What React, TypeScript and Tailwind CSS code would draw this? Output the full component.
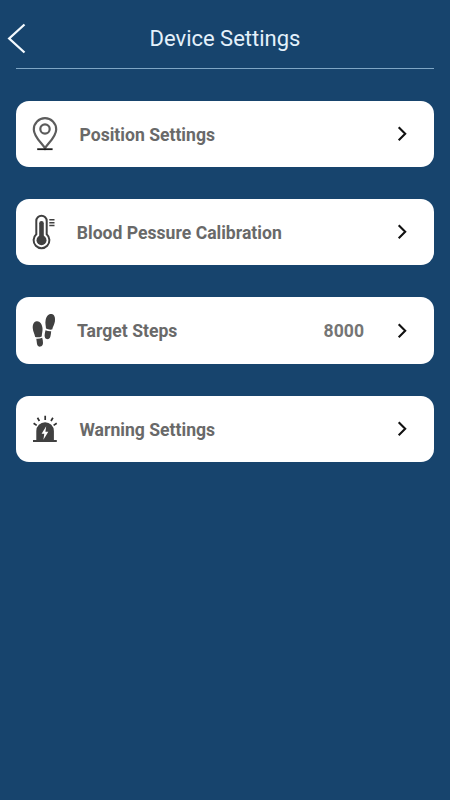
import React from 'react';

const PinIcon = () => (
  <svg width="40" height="40" viewBox="0 0 40 40" fill="none" stroke="#5c5c5c" strokeWidth="2.2">
    <path d="M19 34.3C16.5 29.5 7.8 23 7.8 15.4a11.2 11.2 0 0 1 22.4 0C30.2 23 21.5 29.5 19 34.3z" />
    <circle cx="19" cy="15" r="4.7" />
    <path d="M11.2 35.2h15.4" stroke="#1c1c1c" strokeWidth="1.8" />
  </svg>
);

const ThermometerIcon = () => (
  <svg width="40" height="40" viewBox="0 0 40 40" fill="none" stroke="#404040" strokeWidth="2">
    <path d="M10.3 22.3V9a5.2 5.2 0 0 1 10.4 0v13.3a7.9 7.9 0 1 1-10.4 0z" />
    <path d="M15.5 11.2v15" strokeWidth="4.6" strokeLinecap="round" />
    <circle cx="15.5" cy="28.2" r="5" fill="#404040" stroke="none" />
    <path d="M23.3 7.8h5.2M23.3 10.7h5.2M23.3 13.5h5.2" strokeWidth="1.4" />
  </svg>
);

const StepsIcon = () => (
  <svg width="40" height="40" viewBox="0 0 40 40" fill="#404040">
    <path d="M10.6 10.2C7.6 10.6 6.4 14 6.8 17.6c.3 3.1 1.6 5 2.4 8.4 2.2.6 4.5.3 6.5-.6.2-3.2 1.1-4.9.8-8.4-.4-4-2.6-7.2-5.9-6.8z" />
    <path d="M10.3 27.7c2 .2 4-.1 5.9-.9.5 1.9.9 3.6.8 5.2-.1 2-1.1 3.4-2.7 3.6-1.6.2-2.8-.8-3.3-2.7-.3-1.6-.3-3.3-.7-5.2z" />
    <path d="M25.6 3.1c2.9.4 3.9 3.7 3.3 7.5-.5 3.1-1.9 4.8-2.7 8-2.2.4-4.4 0-6.2-1-.1-3.1-1-4.9-.4-8.3.6-4 2.9-6.6 6-6.2z" />
    <path d="M19.5 19.2c1.8.8 3.7 1.1 5.7 1-.3 1.8-.3 3.5-.8 5.2-.6 2-1.9 3-3.4 2.7-1.6-.3-2.4-1.6-2.4-3.6 0-1.8.5-3.5.9-5.3z" />
  </svg>
);

const SirenIcon = () => (
  <svg width="40" height="40" viewBox="0 0 40 40" fill="#404040">
    <path d="M10.3 31V22a8.8 8.8 0 0 1 17.6 0v9h2.9v2H7v-2z" />
    <path d="M20.2 17.3l-4.6 7.4h2.7l-.9 6 4.9-7.9h-2.9z" fill="#fff" />
    <path d="M19.2 6.8v4.2M11.5 8.8l1.9 3.2M26.9 8.8l-1.9 3.2M7.6 14.2l3.1 2.2M30.7 14.2l-3.1 2.2" stroke="#303030" strokeWidth="1.7" />
  </svg>
);

interface SettingItem {
  label: string;
  labelClass: string;
  icon: React.ReactNode;
  value?: string;
}

const settings: SettingItem[] = [
  { label: 'Position Settings', labelClass: 'ml-[13.5px]', icon: <PinIcon /> },
  { label: 'Blood Pessure Calibration', labelClass: 'ml-[10.8px]', icon: <ThermometerIcon /> },
  { label: 'Target Steps', labelClass: 'ml-[11px]', icon: <StepsIcon />, value: '8000' },
  { label: 'Warning Settings', labelClass: 'ml-[13.5px]', icon: <SirenIcon /> },
];

const App: React.FC = () => (
  <div className="min-h-screen w-full bg-[#17446d] px-4 font-[Roboto,sans-serif]">
    <header className="relative flex h-[69px] items-center justify-center border-b border-[#7fa6c4] pt-2.5">
      <button className="absolute -left-[9px] top-[22px]" aria-label="Back">
        <svg width="20" height="32" viewBox="0 0 20 32" fill="none" stroke="#f4faff" strokeWidth="2.3">
          <path d="M17.5 2.5L2.2 16.5l15.3 14" />
        </svg>
      </button>
      <h1 className="text-[22px] leading-7 text-[#e4f1fb]">Device Settings</h1>
    </header>
    <main className="mt-[31.7px] flex flex-col gap-[32.2px]">
      {settings.map((item) => (
        <div key={item.label} className="flex h-[66.2px] items-center rounded-[13px] bg-white pl-2.5 pr-[26px]">
          {item.icon}
          <span className={`${item.labelClass} pt-[2.3px] text-[17.6px] font-bold text-[#696969]`}>{item.label}</span>
          <span className="ml-auto mr-[33px] pt-[2.3px] text-[17.6px] font-bold text-[#757575]">{item.value}</span>
          <svg width="11" height="18" viewBox="0 0 11 18" fill="none" stroke="#111" strokeWidth="2.1">
            <path d="M1.7 2.3L8.2 8.8l-6.5 6.5" />
          </svg>
        </div>
      ))}
    </main>
  </div>
);

export default App;
